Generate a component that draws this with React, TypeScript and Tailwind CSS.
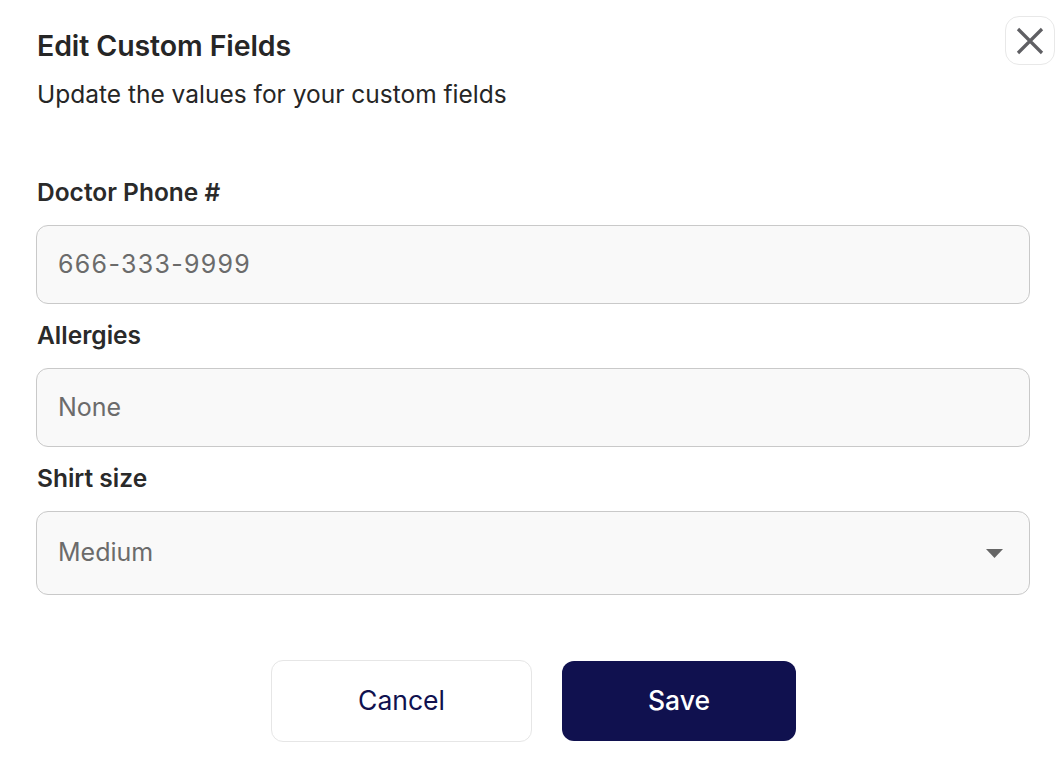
import React from "react";

export default function App() {
  const font = { fontFamily: "Inter, 'Noto Sans', sans-serif" };
  return (
    <div className="w-[1062px] h-[764px] bg-white relative overflow-hidden" style={font}>
      <button className="absolute left-[1005px] top-[16px] w-[50px] h-[49px] rounded-[14px] border border-[#e8e8e8] bg-white flex items-center justify-center">
        <svg width="28" height="28" viewBox="0 0 28 28" fill="none">
          <path d="M2 2L26 26M26 2L2 26" stroke="#5f5f63" strokeWidth="3.2" strokeLinecap="butt" />
        </svg>
      </button>
      <div className="pl-[37px] pr-[32px] pt-[28px] flex flex-col">
        <h1 className="text-[28.5px] leading-[36px] font-semibold text-[#262626] tracking-[-0.1px]">Edit Custom Fields</h1>
        <p className="mt-[13px] text-[24.5px] leading-[34px] text-[#262626]">Update the values for your custom fields</p>

        <label className="mt-[65px] text-[24.5px] leading-[32px] font-semibold text-[#2a2a2a]">Doctor Phone #</label>
        <div className="mt-[17px] -ml-[1px] h-[79px] rounded-[12px] border border-[#c9c9c9] bg-[#f9f9f9] flex items-center pl-[21px]">
          <span className="text-[25px] text-[#6b6b6b] tracking-[1.3px]">666-333-9999</span>
        </div>

        <label className="mt-[15px] text-[24.5px] leading-[32px] font-semibold text-[#2a2a2a]">Allergies</label>
        <div className="mt-[17px] -ml-[1px] h-[79px] rounded-[12px] border border-[#c9c9c9] bg-[#f9f9f9] flex items-center pl-[21px]">
          <span className="text-[25px] text-[#6b6b6b]">None</span>
        </div>

        <label className="mt-[15px] text-[24.5px] leading-[32px] font-semibold text-[#2a2a2a]">Shirt size</label>
        <div className="mt-[17px] -ml-[1px] h-[84px] rounded-[12px] border border-[#c9c9c9] bg-[#f9f9f9] flex items-center justify-between pl-[21px] pr-[26px]">
          <span className="text-[25px] text-[#6b6b6b]">Medium</span>
          <svg width="17" height="9" viewBox="0 0 17 9">
            <path d="M0 0H17L8.5 9Z" fill="#666666" />
          </svg>
        </div>

        <div className="mt-[65px] flex justify-center gap-[30px]">
          <button className="w-[261px] h-[82px] rounded-[12px] border border-[#e6e6e6] bg-white text-[26.5px] text-[#10114f]">Cancel</button>
          <button className="w-[234px] h-[80px] mt-[1px] rounded-[12px] bg-[#10114f] text-[26.5px] font-medium text-white">Save</button>
        </div>
      </div>
    </div>
  );
}
